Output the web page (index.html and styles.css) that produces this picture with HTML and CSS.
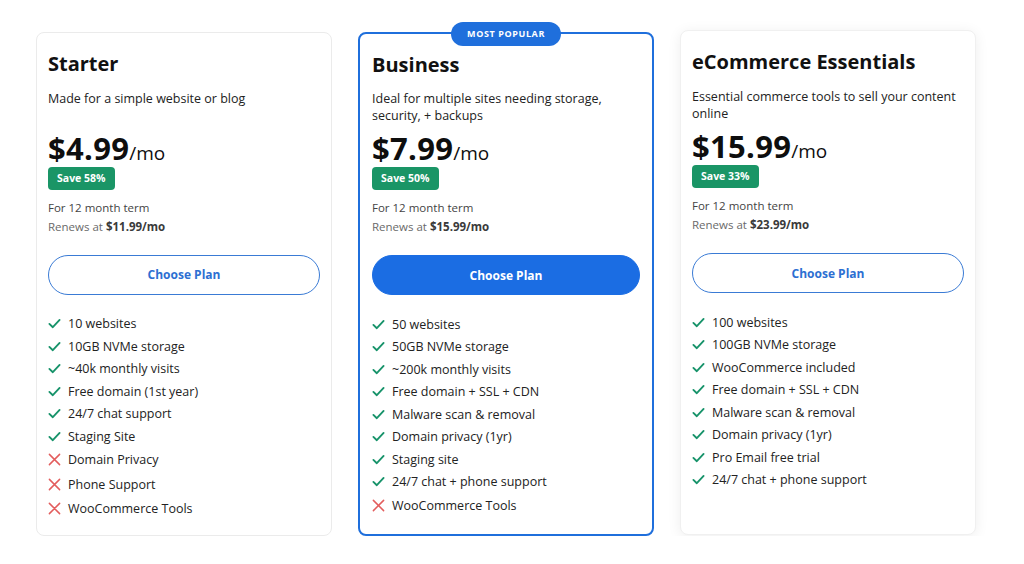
FILE: index.html
```html
<!DOCTYPE html>
<html lang="en">
<head>
<meta charset="utf-8">
<title>Pricing</title>
<link rel="stylesheet" href="styles.css">
</head>
<body>
<main class="pricing">
  <section class="card">
    <h2 class="title">Starter</h2>
    <p class="desc">Made for a simple website or blog</p>
    <div class="price"><span class="amount">$4.99</span><span class="per">/mo</span></div>
    <span class="save">Save 58%</span>
    <p class="term">For 12 month term</p>
    <p class="renew">Renews at <b>$11.99/mo</b></p>
    <button class="btn">Choose Plan</button>
    <ul class="features">
      <li class="yes"><svg class="ico" viewBox="0 0 14 14"><path d="M1.5 7.4 5.2 11 12.5 3.2"/></svg>10 websites</li>
      <li class="yes"><svg class="ico" viewBox="0 0 14 14"><path d="M1.5 7.4 5.2 11 12.5 3.2"/></svg>10GB NVMe storage</li>
      <li class="yes"><svg class="ico" viewBox="0 0 14 14"><path d="M1.5 7.4 5.2 11 12.5 3.2"/></svg>~40k monthly visits</li>
      <li class="yes"><svg class="ico" viewBox="0 0 14 14"><path d="M1.5 7.4 5.2 11 12.5 3.2"/></svg>Free domain (1st year)</li>
      <li class="yes"><svg class="ico" viewBox="0 0 14 14"><path d="M1.5 7.4 5.2 11 12.5 3.2"/></svg>24/7 chat support</li>
      <li class="yes"><svg class="ico" viewBox="0 0 14 14"><path d="M1.5 7.4 5.2 11 12.5 3.2"/></svg>Staging Site</li>
      <li class="no"><svg class="ico" viewBox="0 0 14 14"><path d="M1.5 1.5 12.5 12.5M12.5 1.5 1.5 12.5"/></svg>Domain Privacy</li>
      <li class="no"><svg class="ico" viewBox="0 0 14 14"><path d="M1.5 1.5 12.5 12.5M12.5 1.5 1.5 12.5"/></svg>Phone Support</li>
      <li class="no"><svg class="ico" viewBox="0 0 14 14"><path d="M1.5 1.5 12.5 12.5M12.5 1.5 1.5 12.5"/></svg>WooCommerce Tools</li>
    </ul>
  </section>

  <section class="card popular">
    <span class="flag">MOST POPULAR</span>
    <h2 class="title">Business</h2>
    <p class="desc">Ideal for multiple sites needing storage, security, + backups</p>
    <div class="price"><span class="amount">$7.99</span><span class="per">/mo</span></div>
    <span class="save">Save 50%</span>
    <p class="term">For 12 month term</p>
    <p class="renew">Renews at <b>$15.99/mo</b></p>
    <button class="btn solid">Choose Plan</button>
    <ul class="features">
      <li class="yes"><svg class="ico" viewBox="0 0 14 14"><path d="M1.5 7.4 5.2 11 12.5 3.2"/></svg>50 websites</li>
      <li class="yes"><svg class="ico" viewBox="0 0 14 14"><path d="M1.5 7.4 5.2 11 12.5 3.2"/></svg>50GB NVMe storage</li>
      <li class="yes"><svg class="ico" viewBox="0 0 14 14"><path d="M1.5 7.4 5.2 11 12.5 3.2"/></svg>~200k monthly visits</li>
      <li class="yes"><svg class="ico" viewBox="0 0 14 14"><path d="M1.5 7.4 5.2 11 12.5 3.2"/></svg>Free domain + SSL + CDN</li>
      <li class="yes"><svg class="ico" viewBox="0 0 14 14"><path d="M1.5 7.4 5.2 11 12.5 3.2"/></svg>Malware scan &amp; removal</li>
      <li class="yes"><svg class="ico" viewBox="0 0 14 14"><path d="M1.5 7.4 5.2 11 12.5 3.2"/></svg>Domain privacy (1yr)</li>
      <li class="yes"><svg class="ico" viewBox="0 0 14 14"><path d="M1.5 7.4 5.2 11 12.5 3.2"/></svg>Staging site</li>
      <li class="yes"><svg class="ico" viewBox="0 0 14 14"><path d="M1.5 7.4 5.2 11 12.5 3.2"/></svg>24/7 chat + phone support</li>
      <li class="no"><svg class="ico" viewBox="0 0 14 14"><path d="M1.5 1.5 12.5 12.5M12.5 1.5 1.5 12.5"/></svg>WooCommerce Tools</li>
    </ul>
  </section>

  <section class="card raised">
    <h2 class="title">eCommerce Essentials</h2>
    <p class="desc">Essential commerce tools to sell your content online</p>
    <div class="price"><span class="amount">$15.99</span><span class="per">/mo</span></div>
    <span class="save">Save 33%</span>
    <p class="term">For 12 month term</p>
    <p class="renew">Renews at <b>$23.99/mo</b></p>
    <button class="btn">Choose Plan</button>
    <ul class="features">
      <li class="yes"><svg class="ico" viewBox="0 0 14 14"><path d="M1.5 7.4 5.2 11 12.5 3.2"/></svg>100 websites</li>
      <li class="yes"><svg class="ico" viewBox="0 0 14 14"><path d="M1.5 7.4 5.2 11 12.5 3.2"/></svg>100GB NVMe storage</li>
      <li class="yes"><svg class="ico" viewBox="0 0 14 14"><path d="M1.5 7.4 5.2 11 12.5 3.2"/></svg>WooCommerce included</li>
      <li class="yes"><svg class="ico" viewBox="0 0 14 14"><path d="M1.5 7.4 5.2 11 12.5 3.2"/></svg>Free domain + SSL + CDN</li>
      <li class="yes"><svg class="ico" viewBox="0 0 14 14"><path d="M1.5 7.4 5.2 11 12.5 3.2"/></svg>Malware scan &amp; removal</li>
      <li class="yes"><svg class="ico" viewBox="0 0 14 14"><path d="M1.5 7.4 5.2 11 12.5 3.2"/></svg>Domain privacy (1yr)</li>
      <li class="yes"><svg class="ico" viewBox="0 0 14 14"><path d="M1.5 7.4 5.2 11 12.5 3.2"/></svg>Pro Email free trial</li>
      <li class="yes"><svg class="ico" viewBox="0 0 14 14"><path d="M1.5 7.4 5.2 11 12.5 3.2"/></svg>24/7 chat + phone support</li>
    </ul>
  </section>
</main>
</body>
</html>
```
FILE: styles.css
```css
* { box-sizing: border-box; }

body {
  margin: 0;
  background: #ffffff;
  font-family: "Open Sans", "Noto Sans", "DejaVu Sans", sans-serif;
  color: #1c1c1c;
}

.pricing {
  display: grid;
  grid-template-columns: repeat(3, 296px);
  column-gap: 26px;
  padding: 32px 0 0 36px;
  align-items: start;
}

.card {
  position: relative;
  display: flex;
  flex-direction: column;
  align-items: flex-start;
  height: 504px;
  padding: 19px 11px 14px;
  border: 1px solid #ebebeb;
  border-radius: 8px;
  background: #fff;
}

.card.popular {
  border: 2px solid #1f6fdc;
  padding: 19px 12px 13px;
}

.card.popular .desc {
  margin-top: 13px;
}

.card.raised {
  margin-top: -2px;
  height: 505px;
  border-color: #f0f0f0;
  box-shadow: 0 2px 14px rgba(0, 0, 0, 0.07);
}

.flag {
  position: absolute;
  top: -12px;
  left: 50%;
  transform: translateX(-50%);
  width: 110px;
  height: 24px;
  border-radius: 12px;
  background: #1f6fdc;
  color: #fff;
  font-size: 9px;
  font-weight: 700;
  letter-spacing: 0.6px;
  line-height: 24px;
  text-align: center;
}

.title {
  margin: 0;
  font-size: 20px;
  line-height: 24px;
  font-weight: 700;
  color: #111;
}

.desc {
  margin: 14px 0 0;
  min-height: 34px;
  font-size: 12.5px;
  line-height: 17px;
  color: #222;
}

.price {
  margin-top: 7px;
  height: 34px;
  display: flex;
  align-items: baseline;
  line-height: 34px;
  color: #0e0e0e;
}

.amount {
  font-size: 31px;
  font-weight: 700;
  letter-spacing: 0.3px;
}

.per {
  font-size: 19px;
  font-weight: 500;
}

.save {
  margin-top: 2px;
  height: 23px;
  padding: 0 9px;
  border-radius: 4px;
  background: #1a9566;
  color: #fff;
  font-size: 10.5px;
  font-weight: 700;
  line-height: 23px;
}

.term {
  margin: 9px 0 0;
  font-size: 11.5px;
  line-height: 18px;
  color: #444;
}

.renew {
  margin: 1px 0 0;
  font-size: 11.5px;
  line-height: 18px;
  color: #6a6a6a;
}

.renew b {
  color: #3a3a3a;
}

.btn {
  margin-top: 19px;
  align-self: stretch;
  height: 40px;
  border: 1.5px solid #3a7bd5;
  border-radius: 20px;
  background: #fff;
  color: #2d6fd2;
  font-family: inherit;
  font-size: 12px;
  font-weight: 700;
  cursor: pointer;
}

.btn.solid {
  background: #1b6de3;
  border-color: #1b6de3;
  color: #fff;
}

.features {
  list-style: none;
  margin: 18px 0 0;
  padding: 0;
}

.features li {
  display: flex;
  align-items: center;
  gap: 7px;
  height: 22.5px;
  font-size: 12.5px;
  color: #222;
}

.features li.no {
  height: 24.5px;
}

.ico {
  width: 13px;
  height: 13px;
  flex: none;
  fill: none;
  stroke-width: 2;
  stroke-linecap: round;
  stroke-linejoin: round;
}

.yes .ico { stroke: #17936a; }
.no .ico { stroke: #e35d5d; stroke-width: 1.6; }
```
